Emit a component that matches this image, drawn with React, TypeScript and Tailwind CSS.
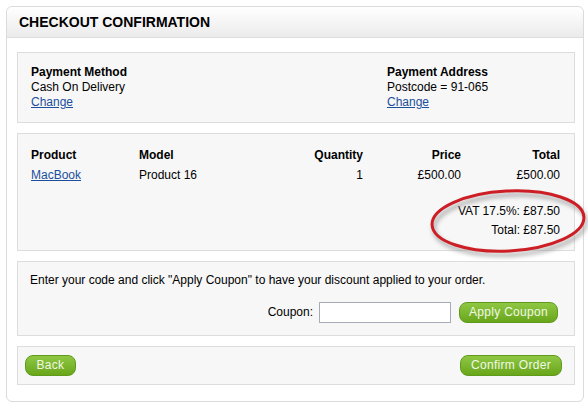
import React from 'react';

const font = { fontFamily: '"Liberation Sans", Arial, sans-serif' };

function GreenButton({ children, className = '' }: { children: React.ReactNode; className?: string }) {
  return (
    <button
      className={
        'h-[21px] whitespace-nowrap rounded-[8px] border border-[#5f9a1c] bg-gradient-to-b from-[#8fc742] to-[#69a619] px-0 text-[12px] leading-[19px] tracking-[0.3px] text-[#f1f8e6] ' +
        className
      }
    >
      {children}
    </button>
  );
}

function Box({ children, className = '' }: { children: React.ReactNode; className?: string }) {
  return <div className={'border border-[#dddddd] bg-[#f7f7f7] ' + className}>{children}</div>;
}

export default function App() {
  return (
    <div className="relative h-[411px] w-[588px] bg-white pl-[6px] pt-[6px] text-[12px] leading-[15px] text-black" style={font}>
      <div className="w-[578px] rounded-[6px] border border-[#dbdbdb] bg-white">
        {/* Header */}
        <div className="flex h-[31px] items-center rounded-t-[6px] border-b border-[#dddddd] bg-gradient-to-b from-white to-[#ebebeb] pl-[12px]">
          <h1 className="text-[14px] font-bold text-black">CHECKOUT CONFIRMATION</h1>
        </div>

        <div className="flex flex-col gap-[10px] pb-[16px] pl-[10px] pr-[8px] pt-[14px]">
          {/* Payment */}
          <Box className="flex py-[12px] pl-[13px]">
            <div className="w-[356px]">
              <div className="font-bold">Payment Method</div>
              <div>Cash On Delivery</div>
              <a href="#" className="text-[#1b4f9c] underline">Change</a>
            </div>
            <div>
              <div className="font-bold">Payment Address</div>
              <div>Postcode = 91-065</div>
              <a href="#" className="text-[#1b4f9c] underline">Change</a>
            </div>
          </Box>

          {/* Products */}
          <Box className="pb-[12px] pl-[13px] pr-[14px] pt-[14px]">
            <div className="grid grid-cols-[108px_124px_100px_98px_1fr] gap-y-[5px]">
              <div className="font-bold">Product</div>
              <div className="font-bold">Model</div>
              <div className="text-right font-bold">Quantity</div>
              <div className="text-right font-bold">Price</div>
              <div className="text-right font-bold">Total</div>
              <a href="#" className="text-[#1b4f9c] underline">MacBook</a>
              <div>Product 16</div>
              <div className="text-right">1</div>
              <div className="text-right">£500.00</div>
              <div className="text-right">£500.00</div>
            </div>
            <div className="mt-[21px] flex flex-col items-end gap-[4px]">
              <div>VAT 17.5%: £87.50</div>
              <div>Total: £87.50</div>
            </div>
          </Box>

          {/* Coupon */}
          <Box className="pb-[12px] pl-[12px] pr-[16px] pt-[11px]">
            <div>Enter your code and click "Apply Coupon" to have your discount applied to your order.</div>
            <div className="mt-[14px] flex items-center justify-end">
              <span className="mr-[6px]">Coupon:</span>
              <input className="h-[21px] w-[132px] border border-[#a3acb7] bg-white" />
              <GreenButton className="ml-[8px] w-[99px]">Apply Coupon</GreenButton>
            </div>
          </Box>

          {/* Actions */}
          <Box className="flex items-center justify-between py-[8px] pl-[7px] pr-[12px]">
            <GreenButton className="w-[51px]">Back</GreenButton>
            <GreenButton className="w-[102px]">Confirm Order</GreenButton>
          </Box>
        </div>
      </div>

      {/* hand-drawn highlight */}
      <svg className="pointer-events-none absolute left-0 top-0" width="588" height="411">
        <defs>
          <filter id="blur" x="-20%" y="-20%" width="140%" height="140%">
            <feGaussianBlur stdDeviation="2" />
          </filter>
        </defs>
        <ellipse cx="510" cy="225" rx="76" ry="30" fill="none" stroke="#8a8a8a" strokeWidth="3.5" opacity="0.7" filter="url(#blur)" transform="rotate(-3 510 225)" />
        <ellipse cx="508" cy="221" rx="76" ry="30" fill="none" stroke="#cc1e24" strokeWidth="3" transform="rotate(-3 508 221)" />
      </svg>
    </div>
  );
}
